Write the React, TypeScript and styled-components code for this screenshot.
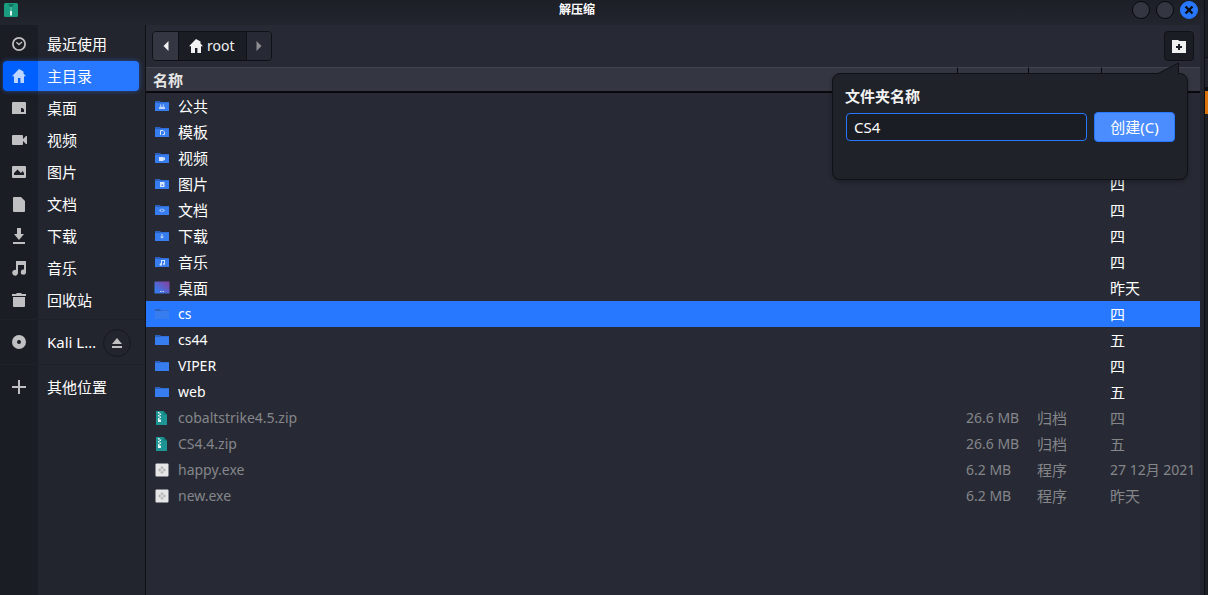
import React from "react";
import styled, { createGlobalStyle, css } from "styled-components";

const Global = createGlobalStyle`
  * { box-sizing: border-box; }
  html, body, #root { height: 100%; }
  body {
    margin: 0;
    background: #23252e;
    color: #ffffff;
    font-family: "Noto Sans", "Noto Sans CJK SC", sans-serif;
    font-size: 15px;
    line-height: 20px;
    overflow: hidden;
  }
  button, input { font: inherit; color: inherit; }
`;

const Screen = styled.div`
  display: flex;
  min-height: 100vh;
`;

const Window = styled.div`
  flex: 1;
  min-width: 0;
  display: flex;
  flex-direction: column;
  background: #23252e;
`;

const Behind = styled.div`
  width: 4px;
  border-left: 1px solid #0e0f14;
  background: #1c1e26;
  padding-top: 57px;
`;

const BehindBar = styled.div`
  height: 34px;
  border-top: 1px solid #0e0f14;
  border-bottom: 4px solid #0e0f14;
  background: #23252e;
`;

const BehindTab = styled.div`
  height: 23px;
  background: #d9730d;
`;

const TitleBar = styled.header`
  height: 25px;
  display: flex;
  align-items: center;
  padding: 0 6px 5px 4px;
  background: linear-gradient(#1d1f27, #23252e);
`;

const Title = styled.h1`
  flex: 1;
  margin: 0;
  padding-left: 4px;
  text-align: center;
  font-size: 12px;
  line-height: 20px;
  font-weight: 700;
`;

const AppIcon = styled.svg`
  width: 14px;
  height: 14px;
`;

const WindowButtons = styled.div`
  display: flex;
  gap: 6px;
`;

const WindowButton = styled.button<{ $close?: boolean }>`
  width: 18px;
  height: 18px;
  padding: 0;
  display: grid;
  place-items: center;
  border-radius: 50%;
  border: 1px solid ${(p) => (p.$close ? "#2777ff" : "#08090c")};
  background: ${(p) => (p.$close ? "#2777ff" : "#343742")};
`;

const Body = styled.div`
  flex: 1;
  display: flex;
`;

const Sidebar = styled.nav`
  width: 146px;
  flex: none;
  border-right: 1px solid #101116;
  background: linear-gradient(to right, #1b1d24 38px, #23252e 38px);
  padding-top: 3px;
`;

const PlaceList = styled.ul`
  list-style: none;
  margin: 0;
  padding: 0 6px 2px 3px;
`;

const PlaceGroup = styled.div`
  border-top: 1px solid #1f2128;
  padding: 6px 6px 5px 3px;
`;

const Place = styled.a<{ $active?: boolean }>`
  display: flex;
  align-items: center;
  height: 30px;
  margin: 1px 0 2px;
  border-radius: 4px;
  color: #ffffff;
  text-decoration: none;
  white-space: nowrap;
  ${(p) =>
    p.$active &&
    css`
      background: linear-gradient(to right, #0060ff 35px, #2777ff 35px);
      box-shadow: 0 0 5px #2777ff88;
    `}
`;

const PlaceIcon = styled.svg<{ $active?: boolean }>`
  width: 16px;
  height: 16px;
  margin: 0 20px 0 8px;
  flex: none;
  color: ${(p) => (p.$active ? "#bdd5ff" : "#c0c0c2")};
`;

const Volume = styled.div`
  display: flex;
  align-items: center;
  justify-content: space-between;
  padding-right: 8px;
`;

const Eject = styled.button`
  width: 28px;
  height: 28px;
  padding: 0;
  display: grid;
  place-items: center;
  border: 1px solid #17181e;
  border-radius: 50%;
  background: transparent;
  color: #c0c0c2;
`;

const Main = styled.main`
  flex: 1;
  min-width: 0;
  background: #272a34;
  margin-right: 4px;
`;

const Toolbar = styled.div`
  height: 42px;
  display: flex;
  justify-content: space-between;
  align-items: center;
  padding: 0 6px;
`;

const PathBar = styled.div`
  display: flex;
  height: 30px;
  border: 1px solid #101116;
  border-radius: 4px;
  overflow: hidden;
`;

const PathButton = styled.button<{ $tone: "raised" | "current" | "flat" }>`
  min-width: 25px;
  display: flex;
  align-items: center;
  justify-content: center;
  gap: 3px;
  border: 0;
  padding: 0 ${(p) => (p.$tone === "current" ? "11px 0 9px" : "0")};
  font-size: 14px;
  color: ${(p) => (p.$tone === "flat" ? "#8d8e92" : "#f2f2f2")};
  background: ${(p) =>
    p.$tone === "raised" ? "#343742" : p.$tone === "current" ? "#1b1d24" : "#272a34"};
  & + & { border-left: 1px solid #101116; }
`;

const PopoverAnchor = styled.div`
  position: relative;
`;

const NewFolder = styled.button`
  width: 30px;
  height: 30px;
  padding: 0;
  display: grid;
  place-items: center;
  border: 1px solid #101116;
  border-radius: 4px;
  background: #1b1d24;
`;

const Popover = styled.form`
  position: absolute;
  z-index: 2;
  top: 42px;
  right: 6px;
  width: 356px;
  height: 107px;
  margin: 0;
  padding: 12px;
  border: 1px solid #101116;
  border-radius: 8px;
  background: #20222a;
  box-shadow: 0 2px 4px #00000044;
`;

const PopoverTip = styled.svg`
  position: absolute;
  top: -12px;
  right: 7px;
  width: 22px;
  height: 12px;
`;

const FieldLabel = styled.label`
  display: block;
  font-weight: 700;
  color: #f2f2f2;
`;

const FieldRow = styled.div`
  display: flex;
  align-items: center;
  gap: 7px;
  margin-top: 6px;
  padding-left: 1px;
`;

const NameInput = styled.input`
  flex: 1;
  min-width: 0;
  height: 28px;
  padding: 0 7px;
  border: 1px solid #2777ff;
  border-radius: 4px;
  outline: 0;
  background: #1b1d24;
`;

const CreateButton = styled.button`
  width: 81px;
  height: 30px;
  padding: 0;
  border: 1px solid #2777ff;
  border-radius: 4px;
  background: #4b8dff;
`;

const Files = styled.table`
  width: 100%;
  table-layout: fixed;
  border-collapse: separate;
  border-spacing: 0;
`;

const HeadCell = styled.th<{ $width?: number }>`
  width: ${(p) => (p.$width ? `${p.$width}px` : "auto")};
  height: 26px;
  padding: 0 7px;
  text-align: left;
  font-weight: 700;
  color: #e6e6e6;
  background: #343742;
  border-top: 1px solid #424550;
  border-bottom: 2px solid #08090c;
  & + & { border-left: 1px solid #08090c; }
`;

const FileRow = styled.tr<{ $selected?: boolean; $dim?: boolean }>`
  color: ${(p) => (p.$dim ? "#85868a" : "#ffffff")};
  background: ${(p) => (p.$selected ? "#2777ff" : "transparent")};
`;

const Cell = styled.td<{ $latin?: boolean }>`
  height: 26px;
  padding: 0 0 0 8px;
  white-space: nowrap;
  font-size: ${(p) => (p.$latin ? 14 : 15)}px;
  & + & { padding-left: 9px; }
`;

const NameCell = styled.div`
  display: flex;
  align-items: center;
  gap: 8px;
`;

const FileIcon = styled.svg`
  width: 16px;
  height: 16px;
  flex: none;
`;

const placeShapes: Record<string, React.ReactNode> = {
  recent: (
    <g fill="none" stroke="currentColor" strokeWidth="1.8">
      <circle cx="8" cy="8" r="6.1" />
      <path d="M5.4 6.2 8 8.6 11 6" strokeWidth="1.4" />
    </g>
  ),
  home: <path fill="currentColor" d="M8 1 1 8.200h2V15h4v-5h2.400v5H13V8.200h2L12.500 5.600V3.500z" />,
  desktop: <path fill="currentColor" fillRule="evenodd" d="M2 2h12a1 1 0 0 1 1 1v11H1V3a1 1 0 0 1 1-1zm8 6v4h3V9.500L11.500 8z" />,
  video: <path fill="currentColor" d="M2 3h9a1 1 0 0 1 1 1v3l3-3h1v8h-1l-3-3v3a1 1 0 0 1-1 1H2a1 1 0 0 1-1-1V4a1 1 0 0 1 1-1z" />,
  image: <path fill="currentColor" fillRule="evenodd" d="M2 2h12a1 1 0 0 1 1 1v10a1 1 0 0 1-1 1H2a1 1 0 0 1-1-1V3a1 1 0 0 1 1-1zm1 9h10V9l-1.500-2L10 9 6.500 5.500 3 9z" />,
  doc: <path fill="currentColor" d="M3 1h7l4 4v10a1 1 0 0 1-1 1H3a1 1 0 0 1-1-1V2a1 1 0 0 1 1-1z" />,
  download: <path fill="currentColor" d="M6 0h4v6h3l-5 6-5-6h3zM2 14h12v2H2z" />,
  music: <path fill="currentColor" d="M5 1h10v11a2.600 2.600 0 1 1-2-2.500V5H7v7.500A2.900 2.900 0 1 1 5 10z" />,
  trash: <path fill="currentColor" d="M6 1h4l1 1h4v2H1V2h4zM2 5h12v9a1 1 0 0 1-1 1H3a1 1 0 0 1-1-1z" />,
  disc: <path fill="currentColor" fillRule="evenodd" d="M8 1a7 7 0 1 1 0 14A7 7 0 0 1 8 1zm0 5a2 2 0 1 0 0 4 2 2 0 0 0 0-4z" />,
  plus: <path fill="currentColor" d="M7 1h2v6h6v2H9v6H7V9H1V7h6z" />,
};

const emblems: Record<string, React.ReactNode> = {
  public: <path opacity=".85" d="M5 11V9.500L6.500 8 8 9l1.500-1L11 9.500V11zM6 6.500h1.200v1.200H6zM8.800 6.500H10v1.200H8.800z" />,
  template: <path fill="none" stroke="#d7e5fd" d="M6.500 11V6.500h2.500l1.500 1.500v2.500H8.500" />,
  video: <path d="M5 7h4.500v1L11 7.200v3L9.500 9.600V11H5z" />,
  image: <path fillRule="evenodd" d="M6 6h4.500v5H6zm1 3.800h2.500L8.300 8z" />,
  doc: <path fillRule="evenodd" opacity=".6" d="M5 8.500C6.500 6.200 9.500 6.200 11 8.500 9.500 10.800 6.500 10.800 5 8.500zm2 0a1 1 0 1 0 2 0 1 1 0 0 0-2 0z" />,
  download: <path opacity=".85" d="M7.500 6h1v2.500H10l-2 2.300-2-2.300h1.500z" />,
  music: <path d="M7 6h4v4a1 1 0 1 1-1-1V7H8v3.500a1.200 1.200 0 1 1-1-1.200z" />,
};

function FileGlyph({ kind }: { kind: string }) {
  if (kind === "zip")
    return (
      <FileIcon viewBox="0 0 16 16" aria-hidden="true">
        <path fill="#1d9594" d="M2 1h7.500L13 4.500V15H2z" />
        <path fill="#127674" d="M9.500 1v3.500H13z" />
        <path fill="#e9f6f5" d="M4 2h1.500v1.500H4zM5.500 3.500H7V5H5.500zM4 5h1.500v1.500H4zM5.500 6.500H7V8H5.500zM4 8h1.500v1.500H4zM4 9.500h3V12H4z" />
      </FileIcon>
    );
  if (kind === "exe")
    return (
      <FileIcon viewBox="0 0 16 16" aria-hidden="true">
        <rect x="1.500" y="1.500" width="13" height="13" rx="1" fill="#e6e6e6" />
        <path fill="#b8b8b8" d="m8 4 1.700 1.700L8 7.400 6.300 5.700zM8 8.600l1.700 1.700L8 12l-1.700-1.700zM5.700 6.300 7.400 8 5.700 9.700 4 8zM10.300 6.300 12 8l-1.700 1.700L8.600 8z" />
      </FileIcon>
    );
  if (kind === "desktop")
    return (
      <FileIcon viewBox="0 0 16 16" aria-hidden="true">
        <defs>
          <linearGradient id="desk" x1="0" y1="1" x2="1" y2="0">
            <stop offset=".2" stopColor="#3a78e8" />
            <stop offset="1" stopColor="#8a3fa0" />
          </linearGradient>
        </defs>
        <rect x=".5" y="1.500" width="15" height="12" rx=".5" fill="url(#desk)" />
        <path fill="#c9d8f5" d="M6 11h1.500v1H6zM8.500 11H10v1H8.500z" />
      </FileIcon>
    );
  return (
    <FileIcon viewBox="0 0 16 16" aria-hidden="true">
      <path fill="#2a61bd" d="M1 3h5l1 1h8v5H1z" />
      <path fill="#377df0" d="M1 5h5l1-.500h8V13H1z" />
      <g fill="#d7e5fd">{emblems[kind]}</g>
    </FileIcon>
  );
}

const places = [
  ["recent", "最近使用"],
  ["home", "主目录"],
  ["desktop", "桌面"],
  ["video", "视频"],
  ["image", "图片"],
  ["doc", "文档"],
  ["download", "下载"],
  ["music", "音乐"],
  ["trash", "回收站"],
];

type Entry = { icon: string; name: string; size?: string; type?: string; date?: string };

const entries: Entry[] = [
  { icon: "public", name: "公共" },
  { icon: "template", name: "模板" },
  { icon: "video", name: "视频" },
  { icon: "image", name: "图片", date: "四" },
  { icon: "doc", name: "文档", date: "四" },
  { icon: "download", name: "下载", date: "四" },
  { icon: "music", name: "音乐", date: "四" },
  { icon: "desktop", name: "桌面", date: "昨天" },
  { icon: "folder", name: "cs", date: "四" },
  { icon: "folder", name: "cs44", date: "五" },
  { icon: "folder", name: "VIPER", date: "四" },
  { icon: "folder", name: "web", date: "五" },
  { icon: "zip", name: "cobaltstrike4.5.zip", size: "26.6 MB", type: "归档", date: "四" },
  { icon: "zip", name: "CS4.4.zip", size: "26.6 MB", type: "归档", date: "五" },
  { icon: "exe", name: "happy.exe", size: "6.2 MB", type: "程序", date: "27 12月 2021" },
  { icon: "exe", name: "new.exe", size: "6.2 MB", type: "程序", date: "昨天" },
];

const hasLatin = (text = "") => /[0-9a-z]/i.test(text);

function PlaceLink({ icon, label, active }: { icon: string; label: string; active?: boolean }) {
  return (
    <Place href="#" $active={active}>
      <PlaceIcon viewBox="0 0 16 16" $active={active} aria-hidden="true">
        {placeShapes[icon]}
      </PlaceIcon>
      {label}
    </Place>
  );
}

export default function App() {
  const [folderName, setFolderName] = React.useState("CS4");
  return (
    <Screen>
      <Global />
      <Window>
        <TitleBar>
          <AppIcon viewBox="0 0 14 14" aria-hidden="true">
            <rect width="14" height="14" rx="1.500" fill="#1a9c80" />
            <path fill="#127560" d="M4 1h6L8 4H6z" />
            <path fill="#4fb8a0" d="M6.200 4h1.600v4H6.200z" />
            <path fill="#e6f6f2" d="M6 8h2v4.500H6z" />
          </AppIcon>
          <Title>解压缩</Title>
          <WindowButtons>
            <WindowButton aria-label="最小化" />
            <WindowButton aria-label="最大化" />
            <WindowButton $close aria-label="关闭">
              <svg width="10" height="10" viewBox="0 0 10 10" stroke="#0b0d12" strokeWidth="2.400">
                <path d="m1.500 1.500 7 7m0-7-7 7" />
              </svg>
            </WindowButton>
          </WindowButtons>
        </TitleBar>
        <Body>
          <Sidebar>
            <PlaceList>
              {places.map(([icon, label]) => (
                <li key={icon}>
                  <PlaceLink icon={icon} label={label} active={icon === "home"} />
                </li>
              ))}
            </PlaceList>
            <PlaceGroup>
              <Volume>
                <PlaceLink icon="disc" label="Kali L…" />
                <Eject aria-label="弹出">
                  <svg width="12" height="12" viewBox="0 0 12 12" fill="currentColor">
                    <path d="M6 1 11 7H1zM1 9h10v2H1z" />
                  </svg>
                </Eject>
              </Volume>
            </PlaceGroup>
            <PlaceGroup>
              <PlaceLink icon="plus" label="其他位置" />
            </PlaceGroup>
          </Sidebar>
          <Main>
            <Toolbar>
              <PathBar>
                <PathButton $tone="raised" aria-label="后退">
                  <svg width="6" height="10" viewBox="0 0 6 10" fill="currentColor"><path d="M5.500 0v10L.500 5z" /></svg>
                </PathButton>
                <PathButton $tone="current">
                  <svg width="16" height="16" viewBox="0 0 16 16">{placeShapes.home}</svg>
                  root
                </PathButton>
                <PathButton $tone="flat" aria-label="前进">
                  <svg width="6" height="10" viewBox="0 0 6 10" fill="currentColor"><path d="M.500 0v10l5-5z" /></svg>
                </PathButton>
              </PathBar>
              <PopoverAnchor>
                <NewFolder aria-label="新建文件夹">
                  <svg width="16" height="16" viewBox="0 0 16 16">
                    <path fill="#f0f0f0" fillRule="evenodd" d="M1 2h6l1.500 1H15v12H1zm6 4v2H5v2h2v2h2v-2h2V8H9V6z" />
                  </svg>
                </NewFolder>
                <Popover onSubmit={(e) => e.preventDefault()}>
                  <PopoverTip viewBox="0 0 22 12" aria-hidden="true">
                    <path fill="#20222a" stroke="#101116" d="M0 11.500 20.500 1v10.500" />
                    <path fill="#20222a" d="M1 11h19v1H1z" />
                  </PopoverTip>
                  <FieldLabel htmlFor="folder-name">文件夹名称</FieldLabel>
                  <FieldRow>
                    <NameInput
                      id="folder-name"
                      value={folderName}
                      onChange={(e) => setFolderName(e.target.value)}
                    />
                    <CreateButton type="submit">创建(C)</CreateButton>
                  </FieldRow>
                </Popover>
              </PopoverAnchor>
            </Toolbar>
            <Files>
              <thead>
                <tr>
                  <HeadCell>名称</HeadCell>
                  <HeadCell $width={71} aria-label="大小" />
                  <HeadCell $width={73} aria-label="类型" />
                  <HeadCell $width={99} aria-label="修改时间" />
                </tr>
              </thead>
              <tbody>
                {entries.map((f) => (
                  <FileRow key={f.name} $selected={f.name === "cs"} $dim={!!f.size}>
                    <Cell $latin={hasLatin(f.name)}>
                      <NameCell>
                        <FileGlyph kind={f.icon} />
                        {f.name}
                      </NameCell>
                    </Cell>
                    <Cell $latin>{f.size}</Cell>
                    <Cell>{f.type}</Cell>
                    <Cell $latin={hasLatin(f.date)}>{f.date}</Cell>
                  </FileRow>
                ))}
              </tbody>
            </Files>
          </Main>
        </Body>
      </Window>
      <Behind>
        <BehindBar />
        <BehindTab />
      </Behind>
    </Screen>
  );
}
